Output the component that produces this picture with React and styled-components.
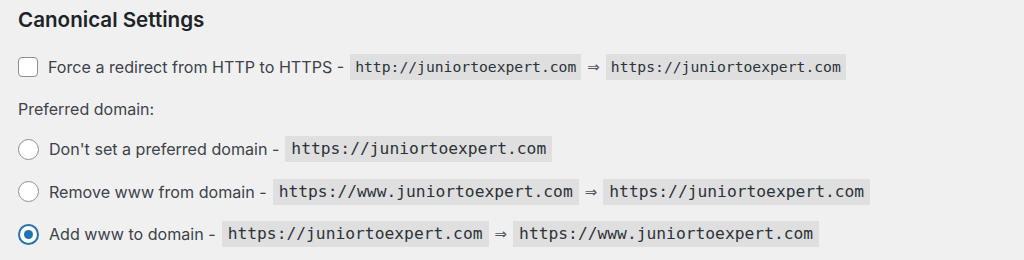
import React from 'react';
import styled, { createGlobalStyle } from 'styled-components';

const GlobalStyle = createGlobalStyle`
  html, body {
    margin: 0;
    background: #f0f0f1;
  }
  body {
    font-family: Inter, "Noto Sans", "Liberation Sans", sans-serif;
    color: #3c434a;
  }
`;

const Section = styled.div`
  padding: 8px 18px 0;
  width: 1024px;
  height: 260px;
  box-sizing: border-box;
`;

const Title = styled.h2`
  margin: 0 0 22px;
  font-size: 20.6px;
  line-height: 24px;
  font-weight: 600;
  color: #1d2327;
`;

const Row = styled.div`
  display: flex;
  align-items: center;
  gap: 6px;
  height: 26px;
  margin-bottom: ${p => p.$space || 16.5}px;
  font-size: 16.1px;
`;

const Plain = styled.div`
  font-size: 16px;
  line-height: 18px;
  margin-bottom: 18px;
`;

const Checkbox = styled.span`
  width: 20px;
  height: 20px;
  box-sizing: border-box;
  border: 1px solid #8c8f94;
  border-radius: 4px;
  background: #fff;
  margin-right: 4px;
  flex-shrink: 0;
`;

const Radio = styled.span`
  width: 21px;
  height: 21px;
  box-sizing: border-box;
  border-radius: 50%;
  background: #fff;
  border: ${p => (p.$checked ? '2px solid #2271b1' : '1px solid #8c8f94')};
  margin-right: 4px;
  flex-shrink: 0;
  display: flex;
  align-items: center;
  justify-content: center;

  &::after {
    content: '';
    display: ${p => (p.$checked ? 'block' : 'none')};
    width: 9px;
    height: 9px;
    border-radius: 50%;
    background: #2271b1;
  }
`;

const Code = styled.code`
  font-family: "DejaVu Sans Mono", "Liberation Mono", monospace;
  font-size: ${p => (p.$small ? 14.7 : 16.3)}px;
  line-height: 26px;
  height: 26px;
  padding: 0 ${p => (p.$small ? 5 : 6)}px;
  background: rgba(0, 0, 0, 0.07);
  color: #2c3338;
`;

const Arrow = styled.span`
  font-family: "DejaVu Sans", sans-serif;
  font-size: 15px;
  color: #50575e;
`;

function Redirect({ from, to, small }) {
  return (
    <>
      <Code $small={small}>{from}</Code>
      <Arrow>⇒</Arrow>
      <Code $small={small}>{to}</Code>
    </>
  );
}

export default function App() {
  return (
    <>
      <GlobalStyle />
      <Section>
        <Title>Canonical Settings</Title>
        <Row $space={20}>
          <Checkbox />
          <span>Force a redirect from HTTP to HTTPS -</span>
          <Redirect small from="http://juniortoexpert.com" to="https://juniortoexpert.com" />
        </Row>
        <Plain>Preferred domain:</Plain>
        <Row>
          <Radio />
          <span>Don't set a preferred domain -</span>
          <Code>https://juniortoexpert.com</Code>
        </Row>
        <Row>
          <Radio />
          <span>Remove www from domain -</span>
          <Redirect from="https://www.juniortoexpert.com" to="https://juniortoexpert.com" />
        </Row>
        <Row>
          <Radio $checked />
          <span>Add www to domain -</span>
          <Redirect from="https://juniortoexpert.com" to="https://www.juniortoexpert.com" />
        </Row>
      </Section>
    </>
  );
}
